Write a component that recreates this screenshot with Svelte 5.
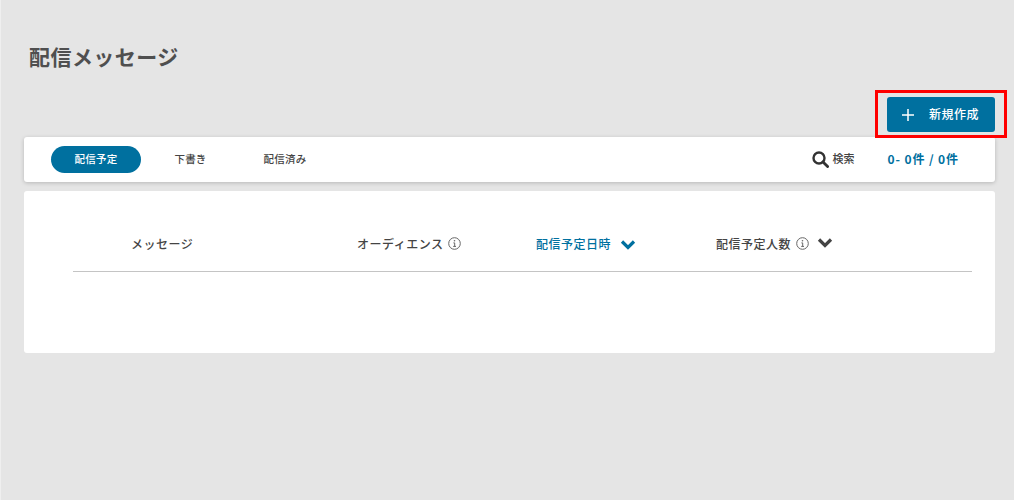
<script>
  const tabs = ['配信予定', '下書き', '配信済み'];
  let active = 0;
</script>

<div class="page">
  <h1>配信メッセージ</h1>

  <div class="actions">
    <div class="highlight"></div>
    <button class="create">
      <svg width="12" height="12" viewBox="0 0 12 12"><path d="M6 0v12M0 6h12" stroke="#fff" stroke-width="1.5" fill="none" /></svg>
      <span>新規作成</span>
    </button>
  </div>

  <div class="toolbar">
    <div class="tabs">
      {#each tabs as tab, i}
        <div class="tab" class:active={i === active}>{tab}</div>
      {/each}
    </div>
    <div class="search">
      <svg width="17" height="17" viewBox="0 0 17 17"><circle cx="7" cy="7" r="5.5" stroke="#333" stroke-width="2.4" fill="none" /><path d="M11 11l4.6 4.6" stroke="#333" stroke-width="2.8" stroke-linecap="round" /></svg>
      <span>検索</span>
    </div>
    <div class="count">0- 0件 / 0件</div>
  </div>

  <div class="card">
    <div class="head">
      <div class="col c1">メッセージ</div>
      <div class="col c2">
        オーディエンス
        <svg class="info" width="13" height="13" viewBox="0 0 13 13"><circle cx="6.5" cy="6.5" r="5.8" stroke="#666" fill="none" /><path d="M5.4 5.9h1.3v3.4M5.2 9.4h2.8" stroke="#666" fill="none" /><circle cx="6.5" cy="3.8" r="0.8" fill="#666" /></svg>
      </div>
      <div class="col c3">
        配信予定日時
        <svg width="16" height="11" viewBox="0 0 16 11"><path d="M2 2.5l6 6 6-6" stroke="#00709f" stroke-width="3.2" fill="none" /></svg>
      </div>
      <div class="col c4">
        配信予定人数
        <svg class="info" width="13" height="13" viewBox="0 0 13 13"><circle cx="6.5" cy="6.5" r="5.8" stroke="#666" fill="none" /><path d="M5.4 5.9h1.3v3.4M5.2 9.4h2.8" stroke="#666" fill="none" /><circle cx="6.5" cy="3.8" r="0.8" fill="#666" /></svg>
        <svg class="chev" width="16" height="11" viewBox="0 0 16 11"><path d="M2 2.5l6 6 6-6" stroke="#444" stroke-width="3.2" fill="none" /></svg>
      </div>
    </div>
  </div>
</div>

<style>
  :global(body) {
    margin: 0;
    background: #e5e5e5;
  }
  .page {
    height: 500px;
    box-sizing: border-box;
    padding: 0 19px 0 23px;
    border-left: 1px solid #efefef;
    font-family: "Noto Sans CJK JP", "Noto Sans", sans-serif;
    color: #444;
    overflow: hidden;
  }
  h1 {
    margin: 0;
    padding: 43px 0 0 5px;
    height: 54px;
    font-size: 21px;
    line-height: 27px;
    font-weight: 700;
    letter-spacing: 0.45px;
    color: #4f4f4f;
  }
  .actions {
    display: flex;
    justify-content: flex-end;
    position: relative;
  }
  .highlight {
    position: absolute;
    right: -12px;
    top: -7px;
    width: 126px;
    height: 42px;
    border: 3px solid #f00;
  }
  .create {
    position: relative;
    width: 108px;
    height: 35px;
    border: none;
    border-radius: 3px;
    background: #00709f;
    color: #fff;
    font: inherit;
    font-size: 12px;
    font-weight: 500;
    letter-spacing: 0.5px;
    display: flex;
    align-items: center;
    padding: 0 0 0 15px;
    gap: 15px;
  }
  .create span {
    margin-bottom: 2px;
  }
  .toolbar {
    margin-top: 5px;
    height: 45px;
    background: #fff;
    border-radius: 3px;
    box-shadow: 0 1px 4px rgba(0, 0, 0, 0.2);
    display: flex;
    align-items: center;
    padding: 0 36px 0 27px;
    font-size: 10.5px;
    font-weight: 500;
  }
  .tabs {
    display: flex;
    flex: 1;
    gap: 4.5px;
  }
  .tab {
    width: 90px;
    height: 27px;
    line-height: 25px;
    text-align: center;
    border-radius: 14px;
    letter-spacing: 0.2px;
  }
  .tab.active {
    background: #00709f;
    color: #fff;
  }
  .search {
    display: flex;
    align-items: center;
    gap: 4px;
    font-size: 11px;
  }
  .search span {
    margin-bottom: 3px;
  }
  .count {
    margin-left: 33px;
    margin-bottom: 2px;
    color: #00709f;
    font-size: 12px;
    font-weight: 700;
    letter-spacing: 0.9px;
  }
  .card {
    margin-top: 9px;
    height: 162px;
    background: #fff;
    border-radius: 3px;
    padding: 0 23px 0 49px;
  }
  .head {
    height: 80px;
    border-bottom: 1px solid #c4c4c4;
    display: flex;
    font-size: 12px;
    font-weight: 500;
    letter-spacing: 0.5px;
  }
  .col {
    display: flex;
    align-items: center;
    gap: 5px;
    height: 100%;
    padding-top: 25px;
    box-sizing: border-box;
  }
  .c1 { width: 225px; padding-left: 58px; }
  .c2 { width: 238px; padding-left: 59px; padding-top: 24px; }
  .c3 { width: 180px; color: #00709f; }
  .c3 svg { margin-left: 4px; margin-top: 1px; }
  .c4 { flex: 1; padding-top: 24px; }
  .c4 .chev { margin-left: 3px; margin-bottom: 2px; }
</style>
